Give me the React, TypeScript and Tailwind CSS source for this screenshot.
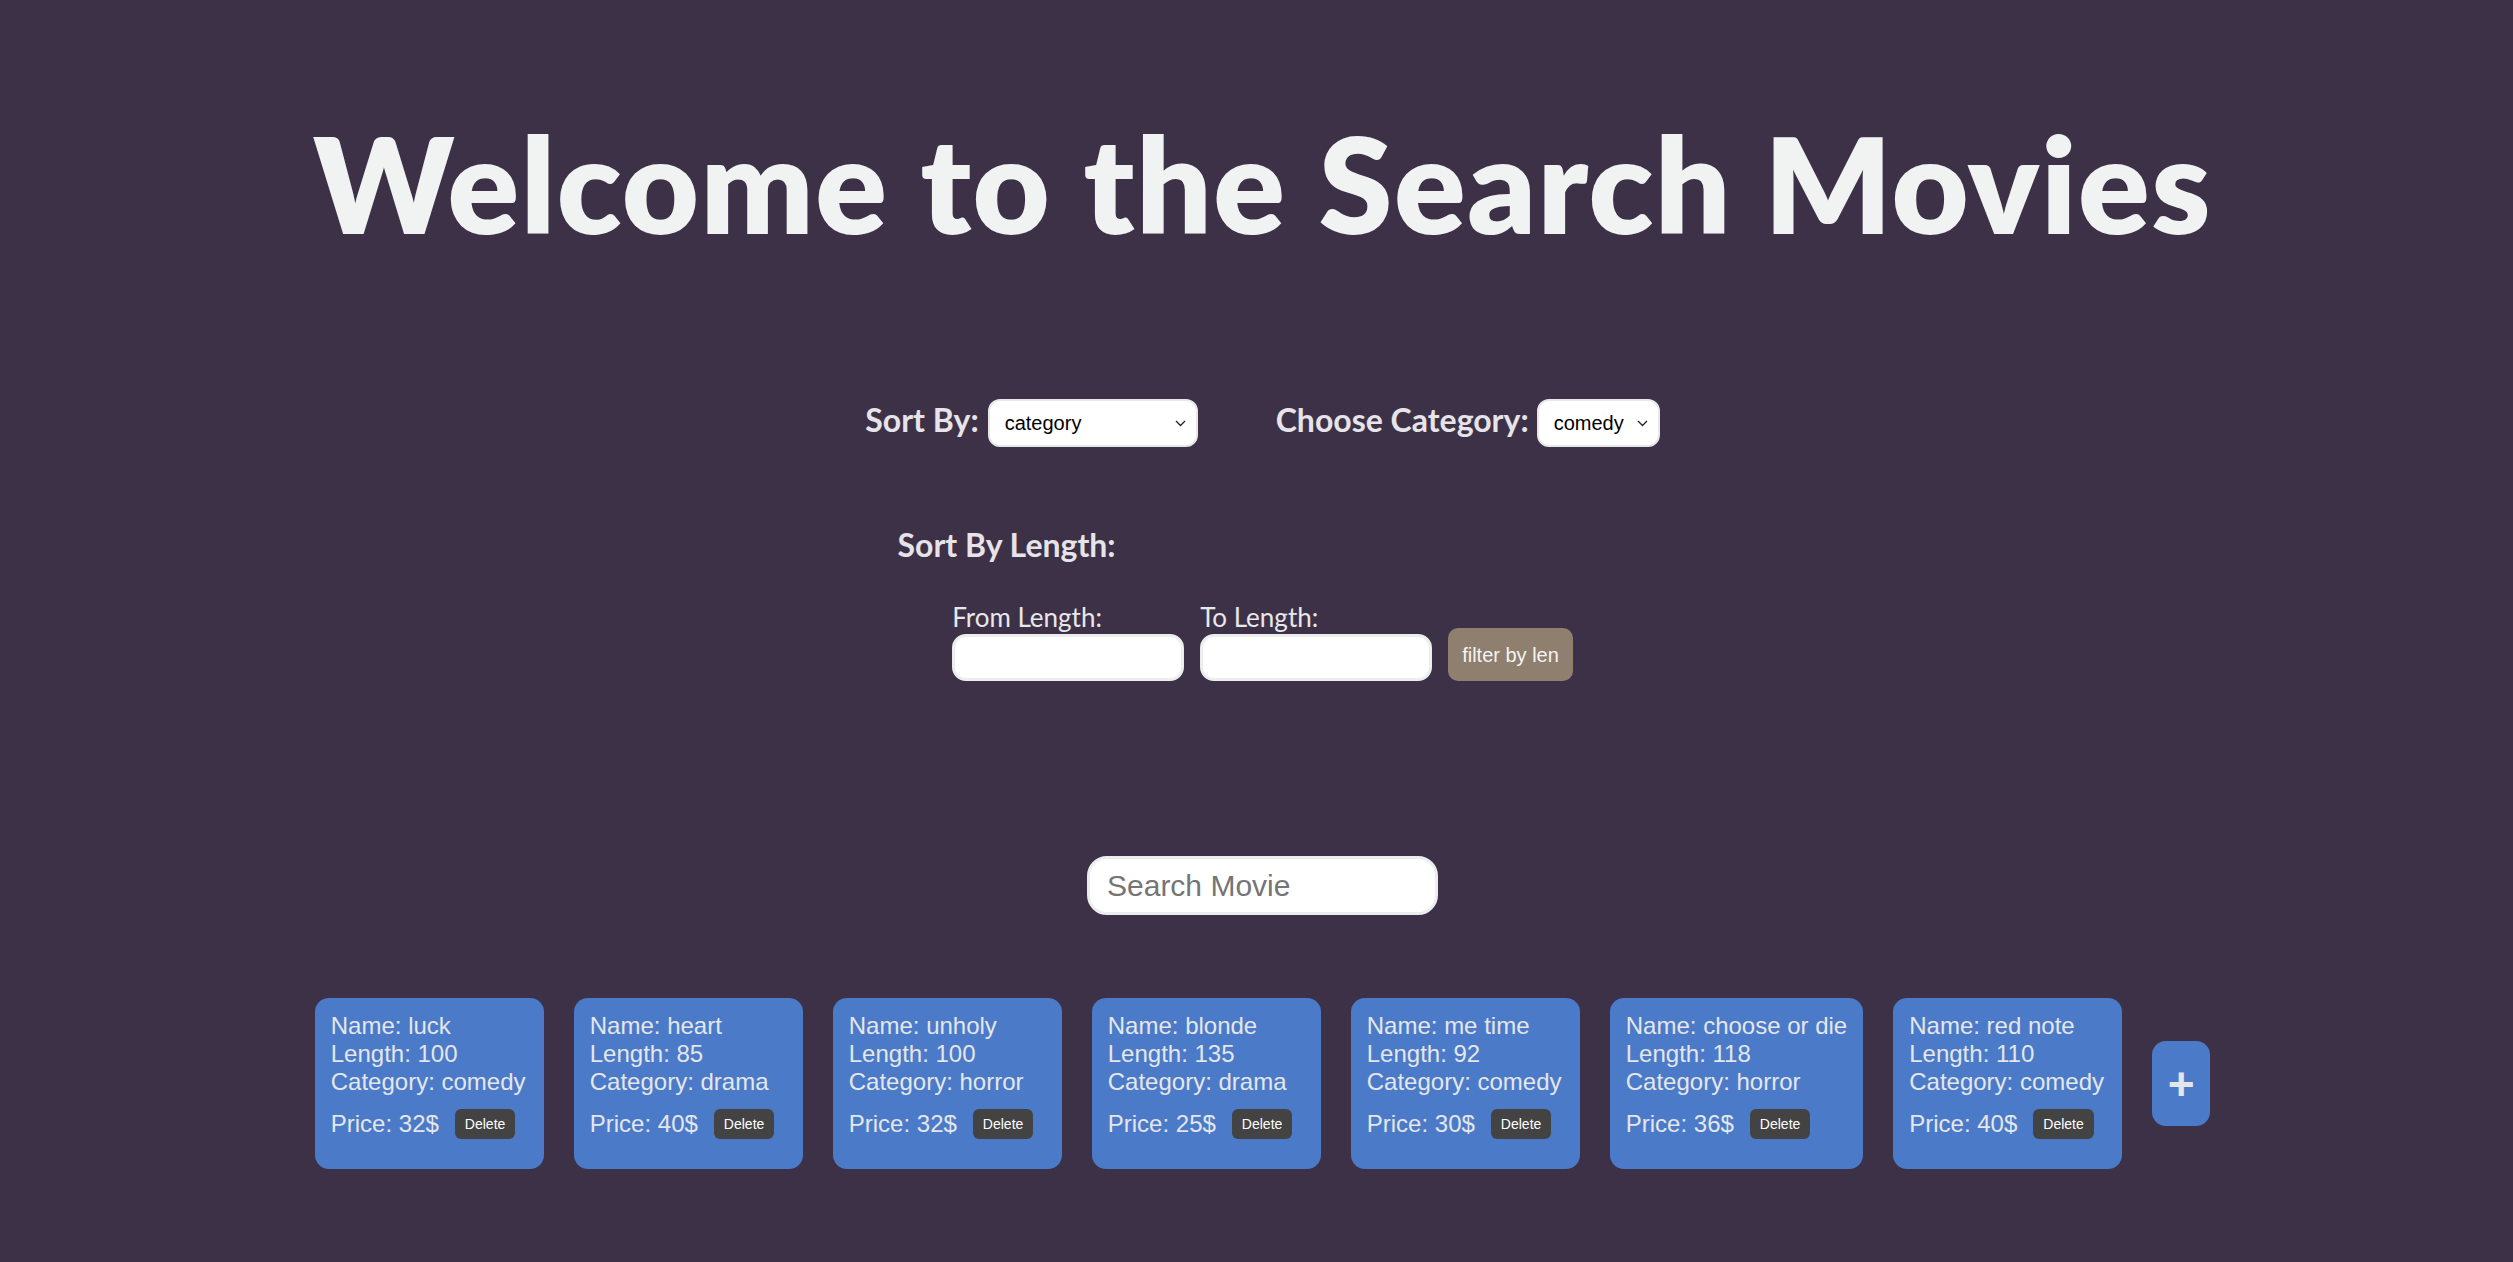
import { useState } from 'react';

interface Movie {
    name: string;
    length: number;
    category: string;
    price: number;
}

const movies: Movie[] = [
    { name: 'luck', length: 100, category: 'comedy', price: 32 },
    { name: 'heart', length: 85, category: 'drama', price: 40 },
    { name: 'unholy', length: 100, category: 'horror', price: 32 },
    { name: 'blonde', length: 135, category: 'drama', price: 25 },
    { name: 'me time', length: 92, category: 'comedy', price: 30 },
    { name: 'choose or die', length: 118, category: 'horror', price: 36 },
    { name: 'red note', length: 110, category: 'comedy', price: 40 },
];

const heading = "font-['Lato','Open_Sans',sans-serif]";
const arial = "font-['Liberation_Sans','Arial',sans-serif]";

function Chevron() {
    return (
        <svg width="11" height="7" viewBox="0 0 11 7" fill="none" className="shrink-0">
            <path d="M1 1l4.5 4.5L10 1" stroke="#222" strokeWidth="1.3" />
        </svg>
    );
}

function FakeSelect({ value, width }: { value: string; width: string }) {
    return (
        <div
            className={`${width} h-[48px] bg-white rounded-[12px] border-2 border-[#e7e9e9] flex items-center justify-between pl-[15px] pr-[10px] ${arial} text-[20px] text-black`}
        >
            <span>{value}</span>
            <Chevron />
        </div>
    );
}

function MovieCard({ movie }: { movie: Movie }) {
    return (
        <div className={`min-w-[229px] bg-[#4b7bc8] rounded-[14px] px-4 pt-[14px] pb-[30px] ${arial} text-[24px] leading-[28px] text-[#e4e6ea]`}>
            <div>Name: {movie.name}</div>
            <div>Length: {movie.length}</div>
            <div>Category: {movie.category}</div>
            <div className="flex items-center gap-4 mt-[13px]">
                <span>Price: {movie.price}$</span>
                <button className="h-[30px] px-[10px] rounded-[6px] bg-[#434343] text-white text-[14px] leading-none">Delete</button>
            </div>
        </div>
    );
}

export default function App() {
    const [search, setSearch] = useState('');

    return (
        <div className="min-h-screen w-full bg-[#3d3147] pl-[12px] flex flex-col items-center pb-[90px]">
            <h1 className={`${heading} font-extrabold text-[133px] leading-none tracking-[1.5px] text-[#f1f3f3] pt-[116px]`}>
                Welcome to the Search Movies
            </h1>

            <div className="flex items-center mt-[150px]">
                <span className={`${heading} font-bold text-[32px] leading-none text-[#e6e4e8] mr-[9px] mb-[6px]`}>Sort By:</span>
                <FakeSelect value="category" width="w-[210px]" />
                <span className={`${heading} font-bold text-[32px] leading-none text-[#e6e4e8] ml-[78px] mr-[8px] mb-[6px]`}>Choose Category:</span>
                <FakeSelect value="comedy" width="w-[123px]" />
            </div>

            <div className="w-[730px] flex flex-col mt-[82px]">
                <span className={`${heading} font-bold text-[32px] leading-none text-[#e6e4e8]`}>Sort By Length:</span>
                <div className="self-center flex items-end gap-4 mt-[43px]">
                    <div className="flex flex-col">
                        <label className={`${heading} text-[26px] leading-none text-[#e8e8ea] mb-[4px]`}>From Length:</label>
                        <input className="w-[232px] h-[47px] bg-white rounded-[14px] border-[3px] border-[#eceeee] outline-none" />
                    </div>
                    <div className="flex flex-col">
                        <label className={`${heading} text-[26px] leading-none text-[#e8e8ea] mb-[4px]`}>To Length:</label>
                        <input className="w-[232px] h-[47px] bg-white rounded-[14px] border-[3px] border-[#eceeee] outline-none" />
                    </div>
                    <button className={`h-[53px] px-[14px] rounded-[10px] bg-[#8f7f6e] text-[#f4f4f4] text-[20px] ${arial}`}>
                        filter by len
                    </button>
                </div>
            </div>

            <input
                value={search}
                onChange={(e) => setSearch(e.target.value)}
                placeholder="Search Movie"
                className={`mt-[175px] w-[351px] h-[59px] bg-white rounded-[20px] border-[3px] border-[#eceeee] px-[17px] text-[30px] ${arial} text-black placeholder:text-[#757575] outline-none`}
            />

            <div className="flex items-center gap-[30px] mt-[83px]">
                {movies.map((m) => (
                    <MovieCard key={m.name} movie={m} />
                ))}
                <button className={`w-[58px] h-[85px] rounded-[14px] bg-[#4b7bc8] text-[#e4e6ea] text-[46px] font-bold leading-none ${arial}`}>
                    +
                </button>
            </div>
        </div>
    );
}
